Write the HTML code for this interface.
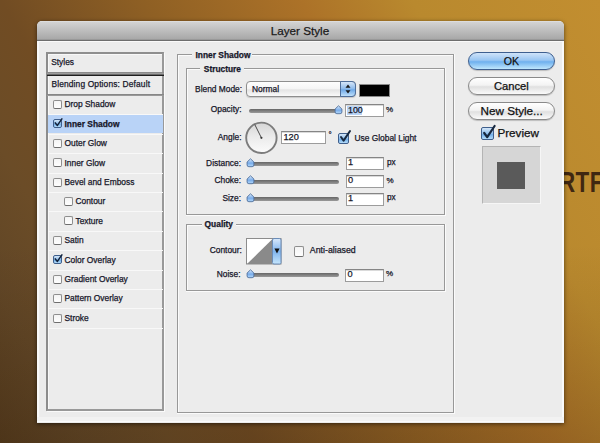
<!DOCTYPE html>
<html><head><meta charset="utf-8">
<style>
*{margin:0;padding:0;box-sizing:border-box}
html,body{width:600px;height:443px;overflow:hidden}
body{position:relative;font-family:"Liberation Sans",sans-serif;
background:linear-gradient(180deg,rgba(30,15,0,0) 55%,rgba(30,15,0,.16) 100%),linear-gradient(60deg,#563c1e 0%,#614626 10%,#6b4c27 20%,#714c23 30%,#8f6024 47%,#ac7228 65%,#b9892e 78%,#c28e30 100%)}
.a{position:absolute}
.t{position:absolute;white-space:nowrap;line-height:1;-webkit-text-stroke:0.25px currentColor}
</style></head><body>
<div class="t" style="left:558.5px;top:168.3px;font-size:28px;font-weight:bold;color:#3f2711;letter-spacing:0.5px;transform:scale(0.8,1.04);transform-origin:0 0;-webkit-text-stroke:0">RTF</div>
<div class="a" style="left:37px;top:21px;width:527px;height:401.5px;background:#ececec;border-radius:5px 5px 0 0;box-shadow:0 1px 4px rgba(0,0,0,.55)"></div>
<div class="a" style="left:37px;top:41px;width:2px;height:381px;background:#f9f9f9"></div>
<div class="a" style="left:562px;top:41px;width:2px;height:381px;background:#f9f9f9"></div>
<div class="a" style="left:37px;top:21px;width:527px;height:20px;border-radius:5px 5px 0 0;background:linear-gradient(#e6e6e6 0,#d3d3d3 1px,#a8a8a8 18px,#8a8a8a 19px,#6e6e6e 19px,#6e6e6e 20px)"></div>
<div class="a" style="left:37px;top:41px;width:527px;height:1px;background:#fafafa"></div>
<div class="a" style="left:37px;top:417px;width:527px;height:4px;background:#f2f2f2"></div>
<div class="a" style="left:37px;top:421px;width:527px;height:1px;background:#fbfbfb"></div>
<div class="t" style="left:270.70px;top:25.10px;font-size:11.7px;color:#1a1a1a;">Layer Style</div>
<div class="a" style="left:46px;top:52px;width:118px;height:359px;border:2px solid #999;border-left-color:#8c8c8c;border-top-color:#8e8e8e;box-shadow:1px 1px 0 #fafafa,inset 1px 1px 0 #f8f8f8"></div>
<div class="t" style="left:51.20px;top:58.49px;font-size:8.4px;color:#17172a;">Styles</div>
<div class="a" style="left:47px;top:72px;width:117px;height:1px;background:#8a8a8a"></div>
<div class="a" style="left:47px;top:73px;width:117px;height:1px;background:#9c9c9c"></div>
<div class="a" style="left:47px;top:74px;width:117px;height:1px;background:#6a6a6a"></div>
<div class="a" style="left:47px;top:75px;width:117px;height:1px;background:#1e1e1e"></div>
<div class="t" style="left:51.40px;top:80.39px;font-size:8.4px;color:#17172a;letter-spacing:0.15px">Blending Options: Default</div>
<div class="a" style="left:47px;top:94px;width:117px;height:2px;background:linear-gradient(#7e7e7e,#a2a2a2)"></div>
<div class="a" style="left:48px;top:114px;width:115px;height:1px;background:#f8f8f8"></div>
<div class="a" style="left:53px;top:100px;width:9px;height:9px;border:1px solid #8e8e8e;border-bottom-color:#6e6e6e;border-radius:2px;background:linear-gradient(#f4f4f4,#fefefe)"></div>
<div class="t" style="left:64.50px;top:100.39px;font-size:8.4px;color:#17172a;">Drop Shadow</div>
<div class="a" style="left:48px;top:115px;width:115px;height:18px;background:#b9d3f7"></div>
<div class="a" style="left:48px;top:134px;width:115px;height:1px;background:#f8f8f8"></div>
<div class="a" style="left:53px;top:119px;width:9px;height:9px;border:1px solid #3f5f8c;border-radius:2px;background:linear-gradient(#d4e6f8,#90c0ee 50%,#74b0ea 60%,#b4dcfa)"></div>
<svg class="a" style="left:53px;top:117px" width="11" height="11" viewBox="0 0 11 11"><path d="M2.3 5.9 L4.4 8.4 L8.9 1.8" fill="none" stroke="#14243c" stroke-width="1.5" stroke-linecap="round" stroke-linejoin="round"/></svg>
<div class="t" style="left:64.50px;top:119.80px;font-size:8.4px;font-weight:bold;color:#17172a;">Inner Shadow</div>
<div class="a" style="left:48px;top:153px;width:115px;height:1px;background:#f8f8f8"></div>
<div class="a" style="left:53px;top:139px;width:9px;height:9px;border:1px solid #8e8e8e;border-bottom-color:#6e6e6e;border-radius:2px;background:linear-gradient(#f4f4f4,#fefefe)"></div>
<div class="t" style="left:64.50px;top:139.21px;font-size:8.4px;color:#17172a;">Outer Glow</div>
<div class="a" style="left:48px;top:173px;width:115px;height:1px;background:#f8f8f8"></div>
<div class="a" style="left:53px;top:158px;width:9px;height:9px;border:1px solid #8e8e8e;border-bottom-color:#6e6e6e;border-radius:2px;background:linear-gradient(#f4f4f4,#fefefe)"></div>
<div class="t" style="left:64.50px;top:158.62px;font-size:8.4px;color:#17172a;">Inner Glow</div>
<div class="a" style="left:48px;top:192px;width:115px;height:1px;background:#f8f8f8"></div>
<div class="a" style="left:53px;top:178px;width:9px;height:9px;border:1px solid #8e8e8e;border-bottom-color:#6e6e6e;border-radius:2px;background:linear-gradient(#f4f4f4,#fefefe)"></div>
<div class="t" style="left:64.50px;top:178.03px;font-size:8.4px;color:#17172a;">Bevel and Emboss</div>
<div class="a" style="left:48px;top:211px;width:115px;height:1px;background:#f8f8f8"></div>
<div class="a" style="left:64px;top:197px;width:9px;height:9px;border:1px solid #8e8e8e;border-bottom-color:#6e6e6e;border-radius:2px;background:linear-gradient(#f4f4f4,#fefefe)"></div>
<div class="t" style="left:75.50px;top:197.44px;font-size:8.4px;color:#17172a;">Contour</div>
<div class="a" style="left:48px;top:231px;width:115px;height:1px;background:#f8f8f8"></div>
<div class="a" style="left:64px;top:216px;width:9px;height:9px;border:1px solid #8e8e8e;border-bottom-color:#6e6e6e;border-radius:2px;background:linear-gradient(#f4f4f4,#fefefe)"></div>
<div class="t" style="left:75.50px;top:216.85px;font-size:8.4px;color:#17172a;">Texture</div>
<div class="a" style="left:48px;top:250px;width:115px;height:1px;background:#f8f8f8"></div>
<div class="a" style="left:53px;top:236px;width:9px;height:9px;border:1px solid #8e8e8e;border-bottom-color:#6e6e6e;border-radius:2px;background:linear-gradient(#f4f4f4,#fefefe)"></div>
<div class="t" style="left:64.50px;top:236.26px;font-size:8.4px;color:#17172a;">Satin</div>
<div class="a" style="left:48px;top:270px;width:115px;height:1px;background:#f8f8f8"></div>
<div class="a" style="left:53px;top:255px;width:9px;height:9px;border:1px solid #3f5f8c;border-radius:2px;background:linear-gradient(#d4e6f8,#90c0ee 50%,#74b0ea 60%,#b4dcfa)"></div>
<svg class="a" style="left:53px;top:253px" width="11" height="11" viewBox="0 0 11 11"><path d="M2.3 5.9 L4.4 8.4 L8.9 1.8" fill="none" stroke="#14243c" stroke-width="1.5" stroke-linecap="round" stroke-linejoin="round"/></svg>
<div class="t" style="left:64.50px;top:255.67px;font-size:8.4px;color:#17172a;">Color Overlay</div>
<div class="a" style="left:48px;top:289px;width:115px;height:1px;background:#f8f8f8"></div>
<div class="a" style="left:53px;top:275px;width:9px;height:9px;border:1px solid #8e8e8e;border-bottom-color:#6e6e6e;border-radius:2px;background:linear-gradient(#f4f4f4,#fefefe)"></div>
<div class="t" style="left:64.50px;top:275.08px;font-size:8.4px;color:#17172a;">Gradient Overlay</div>
<div class="a" style="left:48px;top:308px;width:115px;height:1px;background:#f8f8f8"></div>
<div class="a" style="left:53px;top:294px;width:9px;height:9px;border:1px solid #8e8e8e;border-bottom-color:#6e6e6e;border-radius:2px;background:linear-gradient(#f4f4f4,#fefefe)"></div>
<div class="t" style="left:64.50px;top:294.49px;font-size:8.4px;color:#17172a;">Pattern Overlay</div>
<div class="a" style="left:48px;top:328px;width:115px;height:1px;background:#f8f8f8"></div>
<div class="a" style="left:53px;top:314px;width:9px;height:9px;border:1px solid #8e8e8e;border-bottom-color:#6e6e6e;border-radius:2px;background:linear-gradient(#f4f4f4,#fefefe)"></div>
<div class="t" style="left:64.50px;top:313.90px;font-size:8.4px;color:#17172a;">Stroke</div>
<div class="a" style="left:177px;top:54px;width:276px;height:1px;background:#989898"></div>
<div class="a" style="left:178px;top:55px;width:275px;height:1px;background:#fbfbfb"></div>
<div class="a" style="left:177px;top:412px;width:277px;height:1px;background:#989898"></div>
<div class="a" style="left:177px;top:413px;width:278px;height:1px;background:#fbfbfb"></div>
<div class="a" style="left:177px;top:54px;width:1px;height:358px;background:#989898"></div>
<div class="a" style="left:178px;top:55px;width:1px;height:357px;background:#fbfbfb"></div>
<div class="a" style="left:453px;top:54px;width:1px;height:358px;background:#989898"></div>
<div class="a" style="left:454px;top:54px;width:1px;height:359px;background:#fbfbfb"></div>
<div class="a" style="left:186px;top:68px;width:258px;height:1px;background:#989898"></div>
<div class="a" style="left:187px;top:69px;width:257px;height:1px;background:#fbfbfb"></div>
<div class="a" style="left:186px;top:214px;width:259px;height:1px;background:#989898"></div>
<div class="a" style="left:186px;top:215px;width:260px;height:1px;background:#fbfbfb"></div>
<div class="a" style="left:186px;top:68px;width:1px;height:146px;background:#989898"></div>
<div class="a" style="left:187px;top:69px;width:1px;height:145px;background:#fbfbfb"></div>
<div class="a" style="left:444px;top:68px;width:1px;height:146px;background:#989898"></div>
<div class="a" style="left:445px;top:68px;width:1px;height:147px;background:#fbfbfb"></div>
<div class="a" style="left:186px;top:224px;width:258px;height:1px;background:#989898"></div>
<div class="a" style="left:187px;top:225px;width:257px;height:1px;background:#fbfbfb"></div>
<div class="a" style="left:186px;top:290px;width:259px;height:1px;background:#989898"></div>
<div class="a" style="left:186px;top:291px;width:260px;height:1px;background:#fbfbfb"></div>
<div class="a" style="left:186px;top:224px;width:1px;height:66px;background:#989898"></div>
<div class="a" style="left:187px;top:225px;width:1px;height:65px;background:#fbfbfb"></div>
<div class="a" style="left:444px;top:224px;width:1px;height:66px;background:#989898"></div>
<div class="a" style="left:445px;top:224px;width:1px;height:67px;background:#fbfbfb"></div>
<div class="a" style="left:192px;top:48px;width:60px;height:12px;background:#ececec"></div>
<div class="t" style="left:195.50px;top:50.99px;font-size:8.4px;font-weight:bold;color:#17172a;">Inner Shadow</div>
<div class="a" style="left:200px;top:62px;width:44px;height:12px;background:#ececec"></div>
<div class="t" style="left:203.80px;top:64.69px;font-size:8.4px;font-weight:bold;color:#17172a;">Structure</div>
<div class="a" style="left:202px;top:218px;width:33.5px;height:12px;background:#ececec"></div>
<div class="t" style="left:204.60px;top:219.89px;font-size:8.4px;font-weight:bold;color:#17172a;">Quality</div>
<div class="t" style="right:357.90px;top:84.59px;font-size:8.4px;color:#17172a">Blend Mode:</div>
<div class="t" style="right:358.50px;top:104.89px;font-size:8.4px;color:#17172a">Opacity:</div>
<div class="t" style="right:358.50px;top:133.09px;font-size:8.4px;color:#17172a">Angle:</div>
<div class="t" style="right:359.00px;top:158.99px;font-size:8.4px;color:#17172a">Distance:</div>
<div class="t" style="right:359.00px;top:176.49px;font-size:8.4px;color:#17172a">Choke:</div>
<div class="t" style="right:359.00px;top:193.79px;font-size:8.4px;color:#17172a">Size:</div>
<div class="t" style="right:358.20px;top:245.99px;font-size:8.4px;color:#17172a">Contour:</div>
<div class="t" style="right:359.50px;top:269.89px;font-size:8.4px;color:#17172a">Noise:</div>
<div class="a" style="left:246px;top:81px;width:110px;height:16px;border:1px solid #8e8e8e;border-radius:4px;background:linear-gradient(#fdfdfd,#f4f4f4 50%,#e4e4e4 55%,#fafafa);box-shadow:0 1px 1px rgba(0,0,0,.15)"></div>
<div class="a" style="left:340px;top:81px;width:16px;height:16px;border:1px solid #4f6e9a;border-radius:0 4px 4px 0;background:linear-gradient(#d6e6f8,#8ab8ea 50%,#6ea8e6 55%,#bfe0fb)"></div>
<svg class="a" style="left:343px;top:83px" width="10" height="12" viewBox="0 0 10 12"><path d="M5 1.5 L7.5 4.8 L2.5 4.8Z M5 10.5 L7.5 7.2 L2.5 7.2Z" fill="#1a1a1a"/></svg>
<div class="t" style="left:252.00px;top:84.69px;font-size:8.4px;color:#17172a;">Normal</div>
<div class="a" style="left:359px;top:84px;width:31px;height:13px;background:#000;border:1px solid #8a8a8a"></div>
<div class="a" style="left:249px;top:109px;width:90px;height:4px;border-radius:2px;background:linear-gradient(#666,#9a9a9a)"></div>
<svg class="a" style="left:333.5px;top:104.5px" width="9" height="10" viewBox="0 0 9 10"><defs><linearGradient id="tg" x1="0" y1="0" x2="0" y2="1"><stop offset="0" stop-color="#dbeafa"/><stop offset=".55" stop-color="#78acea"/><stop offset="1" stop-color="#b6dafb"/></linearGradient></defs><path d="M4.5 0.8 L7.9 4 L7.9 6.9 Q7.9 8.7 6.1 8.7 L2.9 8.7 Q1.1 8.7 1.1 6.9 L1.1 4Z" fill="url(#tg)" stroke="#4f6f9c" stroke-width="0.9"/></svg>
<div class="a" style="left:249px;top:162px;width:90px;height:4px;border-radius:2px;background:linear-gradient(#666,#9a9a9a)"></div>
<div class="a" style="left:249px;top:179.5px;width:90px;height:4px;border-radius:2px;background:linear-gradient(#666,#9a9a9a)"></div>
<div class="a" style="left:249px;top:197px;width:90px;height:4px;border-radius:2px;background:linear-gradient(#666,#9a9a9a)"></div>
<svg class="a" style="left:245.5px;top:157.5px" width="9" height="10" viewBox="0 0 9 10"><defs><linearGradient id="tg" x1="0" y1="0" x2="0" y2="1"><stop offset="0" stop-color="#dbeafa"/><stop offset=".55" stop-color="#78acea"/><stop offset="1" stop-color="#b6dafb"/></linearGradient></defs><path d="M4.5 0.8 L7.9 4 L7.9 6.9 Q7.9 8.7 6.1 8.7 L2.9 8.7 Q1.1 8.7 1.1 6.9 L1.1 4Z" fill="url(#tg)" stroke="#4f6f9c" stroke-width="0.9"/></svg>
<svg class="a" style="left:245.5px;top:175px" width="9" height="10" viewBox="0 0 9 10"><defs><linearGradient id="tg" x1="0" y1="0" x2="0" y2="1"><stop offset="0" stop-color="#dbeafa"/><stop offset=".55" stop-color="#78acea"/><stop offset="1" stop-color="#b6dafb"/></linearGradient></defs><path d="M4.5 0.8 L7.9 4 L7.9 6.9 Q7.9 8.7 6.1 8.7 L2.9 8.7 Q1.1 8.7 1.1 6.9 L1.1 4Z" fill="url(#tg)" stroke="#4f6f9c" stroke-width="0.9"/></svg>
<svg class="a" style="left:245.5px;top:192.5px" width="9" height="10" viewBox="0 0 9 10"><defs><linearGradient id="tg" x1="0" y1="0" x2="0" y2="1"><stop offset="0" stop-color="#dbeafa"/><stop offset=".55" stop-color="#78acea"/><stop offset="1" stop-color="#b6dafb"/></linearGradient></defs><path d="M4.5 0.8 L7.9 4 L7.9 6.9 Q7.9 8.7 6.1 8.7 L2.9 8.7 Q1.1 8.7 1.1 6.9 L1.1 4Z" fill="url(#tg)" stroke="#4f6f9c" stroke-width="0.9"/></svg>
<div class="a" style="left:249px;top:273px;width:90px;height:4px;border-radius:2px;background:linear-gradient(#666,#9a9a9a)"></div>
<svg class="a" style="left:245.5px;top:269px" width="9" height="10" viewBox="0 0 9 10"><defs><linearGradient id="tg" x1="0" y1="0" x2="0" y2="1"><stop offset="0" stop-color="#dbeafa"/><stop offset=".55" stop-color="#78acea"/><stop offset="1" stop-color="#b6dafb"/></linearGradient></defs><path d="M4.5 0.8 L7.9 4 L7.9 6.9 Q7.9 8.7 6.1 8.7 L2.9 8.7 Q1.1 8.7 1.1 6.9 L1.1 4Z" fill="url(#tg)" stroke="#4f6f9c" stroke-width="0.9"/></svg>
<div class="a" style="left:345px;top:104px;width:39px;height:13px;background:#fff;border:1px solid #9c9c9c;border-top-color:#858585;box-shadow:inset 0 1px 0 #dadada"></div>
<div class="a" style="left:347px;top:106px;width:15px;height:9px;background:#b9d4f6"></div>
<div class="t" style="left:348.00px;top:106.15px;font-size:8.8px;color:#17172a;">100</div>
<div class="t" style="left:386.00px;top:105.73px;font-size:8.0px;color:#17172a;">%</div>
<div class="a" style="left:281px;top:131px;width:45px;height:13px;background:#fff;border:1px solid #9c9c9c;border-top-color:#858585;box-shadow:inset 0 1px 0 #dadada"></div>
<div class="t" style="left:283.50px;top:133.01px;font-size:9.2px;color:#17172a;">120</div>
<div class="t" style="left:328.50px;top:131.23px;font-size:8px;color:#17172a;">°</div>
<div class="a" style="left:345.5px;top:157px;width:38px;height:13px;background:#fff;border:1px solid #9c9c9c;border-top-color:#858585;box-shadow:inset 0 1px 0 #dadada"></div>
<div class="t" style="left:348.00px;top:158.21px;font-size:9.2px;color:#17172a;">1</div>
<div class="t" style="left:387.00px;top:158.86px;font-size:8.2px;color:#17172a;">px</div>
<div class="a" style="left:345.5px;top:175px;width:38px;height:13px;background:#fff;border:1px solid #9c9c9c;border-top-color:#858585;box-shadow:inset 0 1px 0 #dadada"></div>
<div class="t" style="left:348.00px;top:176.21px;font-size:9.2px;color:#17172a;">0</div>
<div class="t" style="left:386.50px;top:176.53px;font-size:8.0px;color:#17172a;">%</div>
<div class="a" style="left:345.5px;top:192.5px;width:38px;height:13px;background:#fff;border:1px solid #9c9c9c;border-top-color:#858585;box-shadow:inset 0 1px 0 #dadada"></div>
<div class="t" style="left:348.00px;top:193.71px;font-size:9.2px;color:#17172a;">1</div>
<div class="t" style="left:387.00px;top:193.86px;font-size:8.2px;color:#17172a;">px</div>
<div class="a" style="left:345px;top:269px;width:39px;height:13px;background:#fff;border:1px solid #9c9c9c;border-top-color:#858585;box-shadow:inset 0 1px 0 #dadada"></div>
<div class="t" style="left:347.50px;top:270.21px;font-size:9.2px;color:#17172a;">0</div>
<div class="t" style="left:386.00px;top:269.73px;font-size:8.0px;color:#17172a;">%</div>
<svg class="a" style="left:244px;top:120px" width="36" height="36" viewBox="0 0 36 36"><defs><linearGradient id="dg" x1="0" y1="0" x2="0" y2="1"><stop offset="0" stop-color="#d6d6d6"/><stop offset=".5" stop-color="#ececec"/><stop offset="1" stop-color="#fbfbfb"/></linearGradient></defs><circle cx="17.4" cy="17.8" r="15.2" fill="url(#dg)" stroke="#7c7c7c" stroke-width="1.9"/><line x1="17.4" y1="17.8" x2="10.8" y2="4.6" stroke="#4a4a4a" stroke-width="1"/><circle cx="17.4" cy="17.8" r="1.1" fill="#3a3a3a"/></svg>
<div class="a" style="left:338px;top:132.5px;width:11px;height:11px;border:1px solid #3f5f8c;border-radius:2px;background:linear-gradient(#d4e6f8,#90c0ee 50%,#74b0ea 60%,#b4dcfa)"></div>
<svg class="a" style="left:338px;top:127px" width="14" height="16" viewBox="0 0 14 16"><path d="M3 10 L5.6 13.6 L12 4" fill="none" stroke="#17283f" stroke-width="2" stroke-linecap="round" stroke-linejoin="round"/></svg>
<div class="t" style="left:354.50px;top:133.69px;font-size:8.4px;color:#17172a;">Use Global Light</div>
<svg class="a" style="left:246px;top:238px" width="36" height="27" viewBox="0 0 36 27"><defs><linearGradient id="cg" x1="0" y1="0" x2="0" y2="1"><stop offset="0" stop-color="#d8e8fa"/><stop offset=".5" stop-color="#7fb4ee"/><stop offset="1" stop-color="#c6e6fc"/></linearGradient></defs><rect x="0.5" y="0.5" width="34.5" height="25.5" fill="#fff" stroke="#8c8c8c"/><path d="M1 26 L26.5 1 L26.5 26Z" fill="#8a8a8a"/><rect x="26.5" y="0.5" width="8.5" height="25.5" rx="1.5" fill="url(#cg)" stroke="#6a8cb8" stroke-width="1"/><path d="M28.4 10.6 L33.6 10.6 L31 15.4Z" fill="#111"/></svg>
<div class="a" style="left:293.5px;top:246px;width:10.5px;height:10.5px;border:1px solid #8e8e8e;border-bottom-color:#6e6e6e;border-radius:2px;background:linear-gradient(#f4f4f4,#fefefe)"></div>
<div class="t" style="left:309.80px;top:246.35px;font-size:8.8px;color:#17172a;">Anti-aliased</div>
<div class="a" style="left:468px;top:52px;width:87px;height:18px;border:1px solid #3e5f8f;border-radius:9px;background:linear-gradient(#cfe3f9,#9ac6f2 45%,#6fb0ee 55%,#bfe6fd);box-shadow:0 1px 1px rgba(0,0,0,.2)"></div>
<div class="t" style="left:503.80px;top:56.03px;font-size:10.6px;color:#111;">OK</div>
<div class="a" style="left:468px;top:77px;width:87px;height:18px;border:1px solid #8a8a8a;border-radius:9px;background:linear-gradient(#ffffff,#f3f3f3 45%,#e0e0e0 55%,#fafafa);box-shadow:0 1px 1px rgba(0,0,0,.2)"></div>
<div class="t" style="left:494.00px;top:80.52px;font-size:11.2px;color:#111;">Cancel</div>
<div class="a" style="left:468px;top:102px;width:87px;height:18px;border:1px solid #8a8a8a;border-radius:9px;background:linear-gradient(#ffffff,#f3f3f3 45%,#e0e0e0 55%,#fafafa);box-shadow:0 1px 1px rgba(0,0,0,.2)"></div>
<div class="t" style="left:480.50px;top:105.10px;font-size:11.7px;color:#111;">New Style...</div>
<div class="a" style="left:481px;top:126.5px;width:13px;height:13px;border:1px solid #3f5f8c;border-radius:2px;background:linear-gradient(#d4e6f8,#90c0ee 50%,#74b0ea 60%,#b4dcfa)"></div>
<svg class="a" style="left:481px;top:122px" width="16" height="18" viewBox="0 0 16 18"><path d="M3.2 11 L6.2 15.2 L13.6 4" fill="none" stroke="#17283f" stroke-width="2.2" stroke-linecap="round" stroke-linejoin="round"/></svg>
<div class="t" style="left:497.40px;top:126.80px;font-size:11.7px;color:#111;">Preview</div>
<div class="a" style="left:482px;top:146px;width:59px;height:58px;background:#d6d6d6;border:1px solid #b4b4b4;border-right-color:#f6f6f6;border-bottom-color:#f6f6f6"></div>
<div class="a" style="left:497px;top:162px;width:28px;height:27px;background:#5a5a5a"></div>
</body></html>
